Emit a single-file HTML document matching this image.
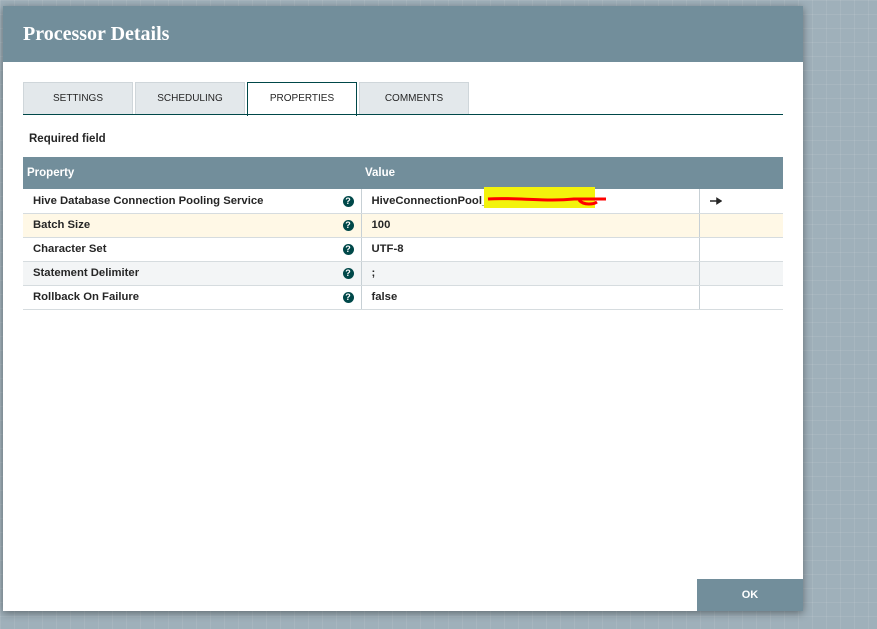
<!DOCTYPE html>
<html><head><meta charset="utf-8"><style>
*{box-sizing:border-box;margin:0;padding:0}
body{width:877px;height:629px;overflow:hidden;position:relative;font-family:"Liberation Sans",sans-serif;
background-color:#9fb0ba;
background-image:linear-gradient(rgba(255,255,255,.08) 1px,transparent 1px),linear-gradient(90deg,rgba(255,255,255,.08) 1px,transparent 1px);
background-size:14px 14px;}
.dlg{position:absolute;left:3px;top:6px;width:800px;height:605px;background:#fff;box-shadow:0 2px 8px rgba(0,0,0,.4)}
.hdr{height:56px;background:#728e9b;color:#fff;font-family:"Liberation Serif",serif;font-weight:bold;font-size:20px;padding:17px 0 0 20px}
.tab{position:absolute;top:76px;height:33px;background:#e3e8eb;border:1px solid #cfd6da;font-size:10px;color:#262626;text-align:center;line-height:32px}
.tab.act{background:#fff;border:1px solid #004849;border-bottom:none;height:34px}
.line{position:absolute;left:20px;top:108px;width:760px;height:1px;background:#004849}
.req{position:absolute;left:26px;top:127px;font-size:11.5px;font-weight:bold;color:#262626}
table{position:absolute;left:20px;top:151px;width:760px;border-collapse:collapse;font-size:11.3px;color:#262626}
th{background:#728e9b;color:#fff;text-align:left;height:32px;font-size:11.5px;padding-left:4px}
td{height:24px;border-bottom:1px solid #d6dcdf;font-weight:bold;padding-left:10px;padding-top:0;padding-bottom:0;line-height:22px}
td.c2{border-left:1px solid #c7d0d5}
td.c3{border-left:1px solid #c7d0d5}
tr.y td{background:#fff8e6}
tr.g td{background:#f3f5f6}
.q{float:right;margin-right:7px;margin-top:6px;width:11px;height:11px;border-radius:50%;background:#004849;color:#fff;font-size:9px;line-height:11px;text-align:center;font-weight:bold}
.ok{position:absolute;left:694px;top:573px;width:106px;height:32px;background:#728e9b;color:#fff;font-weight:bold;font-size:11px;text-align:center;line-height:32px}
</style></head><body>
<div class="dlg">
<div class="hdr">Processor Details</div>
<div class="tab" style="left:20px;width:110px">SETTINGS</div>
<div class="tab" style="left:132px;width:110px">SCHEDULING</div>
<div class="tab act" style="left:244px;width:110px">PROPERTIES</div>
<div class="tab" style="left:356px;width:110px">COMMENTS</div>
<div class="line"></div>
<div class="req">Required field</div>
<table>
<tr><th style="width:338px">Property</th><th style="width:338px">Value</th><th></th></tr>
<tr><td>Hive Database Connection Pooling Service<span class="q">?</span></td><td class="c2" style="position:relative">HiveConnectionPool_<span style="position:absolute;left:122px;top:-2px;width:111px;height:21px;background:#f3f30c"></span><svg style="position:absolute;left:122px;top:3px" width="125" height="16"><path d="M4 7 C30 5 60 10 90 7 L122 7 M95 8 C100 14 110 12 113 10" stroke="#f00" stroke-width="3" fill="none"/></svg></td><td class="c3" style="padding-left:10px"><svg width="12" height="8" style="vertical-align:middle"><path d="M0 4 H9 M7 1.5 L11 4 L7 6.5 Z" stroke="#262626" stroke-width="1.5" fill="#262626"/></svg></td></tr>
<tr class="y"><td>Batch Size<span class="q">?</span></td><td class="c2">100</td><td class="c3"></td></tr>
<tr><td>Character Set<span class="q">?</span></td><td class="c2">UTF-8</td><td class="c3"></td></tr>
<tr class="g"><td>Statement Delimiter<span class="q">?</span></td><td class="c2">;</td><td class="c3"></td></tr>
<tr><td>Rollback On Failure<span class="q">?</span></td><td class="c2">false</td><td class="c3"></td></tr>
</table>
<div class="ok">OK</div>
</div>
</body></html>
